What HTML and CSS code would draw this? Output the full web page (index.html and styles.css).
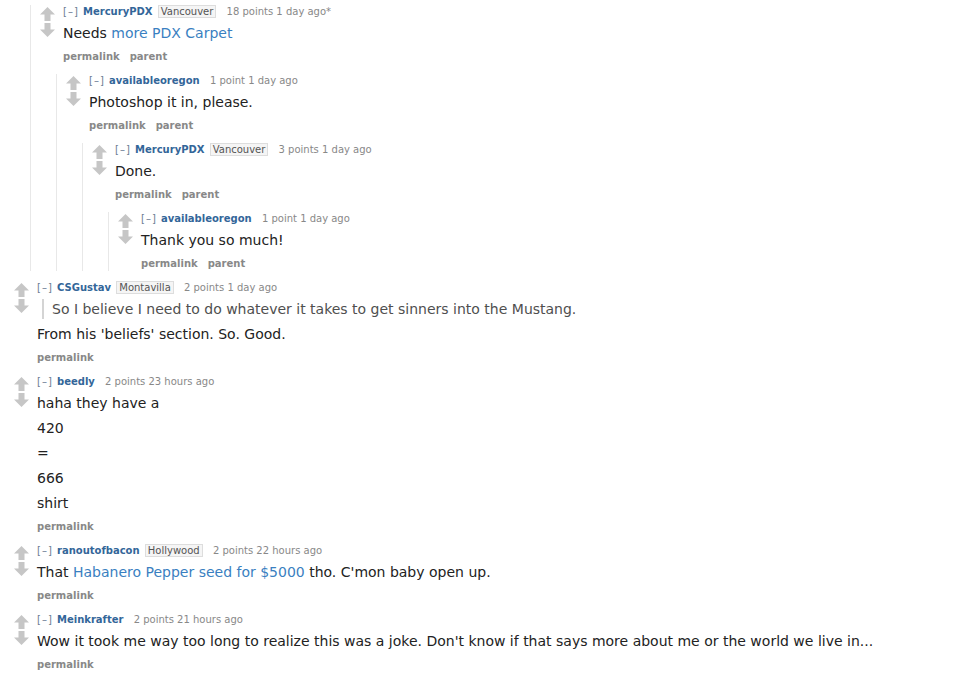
FILE: index.html
```html
<!DOCTYPE html>
<html>
<head>
    <meta charset='utf-8'>
    <title>comments</title>
    <meta name='viewport' content='width=device-width, initial-scale=1'>
    <link rel="stylesheet" href="styles.css">
</head>
<body>
    <svg class="defs" width="0" height="0">
        <defs>
            <symbol id="arrow-up" viewBox="0 0 15 14">
                <path d="M7.5 0 L15 7.5 H10.5 V14 H4.5 V7.5 H0 Z"/>
            </symbol>
            <symbol id="arrow-down" viewBox="0 0 15 14">
                <path d="M7.5 14 L15 6.5 H10.5 V0 H4.5 V6.5 H0 Z"/>
            </symbol>
        </defs>
    </svg>

    <div class="sitetable">
        <div class="child">
            <div class="comment first">
                <div class="row">
                    <div class="midcol">
                        <svg class="arrow up"><use href="#arrow-up"/></svg>
                        <svg class="arrow down"><use href="#arrow-down"/></svg>
                    </div>
                    <div class="entry">
                        <p class="tagline"><a class="expand">[&ndash;]</a> <a class="author">MercuryPDX</a> <span class="flair">Vancouver</span> <span class="score">18 points</span> 1 day ago*</p>
                        <div class="md"><p>Needs <a href="#">more PDX Carpet</a></p></div>
                        <ul class="buttons"><li>permalink</li><li>parent</li></ul>
                    </div>
                </div>
                <div class="child">
                    <div class="comment">
                        <div class="row">
                            <div class="midcol">
                                <svg class="arrow up"><use href="#arrow-up"/></svg>
                                <svg class="arrow down"><use href="#arrow-down"/></svg>
                            </div>
                            <div class="entry">
                                <p class="tagline"><a class="expand">[&ndash;]</a> <a class="author">availableoregon</a> <span class="score">1 point</span> 1 day ago</p>
                                <div class="md"><p>Photoshop it in, please.</p></div>
                                <ul class="buttons"><li>permalink</li><li>parent</li></ul>
                            </div>
                        </div>
                        <div class="child">
                            <div class="comment">
                                <div class="row">
                                    <div class="midcol">
                                        <svg class="arrow up"><use href="#arrow-up"/></svg>
                                        <svg class="arrow down"><use href="#arrow-down"/></svg>
                                    </div>
                                    <div class="entry">
                                        <p class="tagline"><a class="expand">[&ndash;]</a> <a class="author">MercuryPDX</a> <span class="flair">Vancouver</span> <span class="score">3 points</span> 1 day ago</p>
                                        <div class="md"><p>Done.</p></div>
                                        <ul class="buttons"><li>permalink</li><li>parent</li></ul>
                                    </div>
                                </div>
                                <div class="child">
                                    <div class="comment">
                                        <div class="row">
                                            <div class="midcol">
                                                <svg class="arrow up"><use href="#arrow-up"/></svg>
                                                <svg class="arrow down"><use href="#arrow-down"/></svg>
                                            </div>
                                            <div class="entry">
                                                <p class="tagline"><a class="expand">[&ndash;]</a> <a class="author">availableoregon</a> <span class="score">1 point</span> 1 day ago</p>
                                                <div class="md"><p>Thank you so much!</p></div>
                                                <ul class="buttons"><li>permalink</li><li>parent</li></ul>
                                            </div>
                                        </div>
                                    </div>
                                </div>
                            </div>
                        </div>
                    </div>
                </div>
            </div>
        </div>

        <div class="comment">
            <div class="row">
                <div class="midcol">
                    <svg class="arrow up"><use href="#arrow-up"/></svg>
                    <svg class="arrow down"><use href="#arrow-down"/></svg>
                </div>
                <div class="entry">
                    <p class="tagline"><a class="expand">[&ndash;]</a> <a class="author">CSGustav</a> <span class="flair">Montavilla</span> <span class="score">2 points</span> 1 day ago</p>
                    <div class="md">
                        <blockquote><p>So I believe I need to do whatever it takes to get sinners into the Mustang.</p></blockquote>
                        <p>From his 'beliefs' section. So. Good.</p>
                    </div>
                    <ul class="buttons"><li>permalink</li></ul>
                </div>
            </div>
        </div>

        <div class="comment">
            <div class="row">
                <div class="midcol">
                    <svg class="arrow up"><use href="#arrow-up"/></svg>
                    <svg class="arrow down"><use href="#arrow-down"/></svg>
                </div>
                <div class="entry">
                    <p class="tagline"><a class="expand">[&ndash;]</a> <a class="author">beedly</a> <span class="score">2 points</span> 23 hours ago</p>
                    <div class="md">
                        <p>haha they have a</p>
                        <p>420</p>
                        <p>=</p>
                        <p>666</p>
                        <p>shirt</p>
                    </div>
                    <ul class="buttons"><li>permalink</li></ul>
                </div>
            </div>
        </div>

        <div class="comment">
            <div class="row">
                <div class="midcol">
                    <svg class="arrow up"><use href="#arrow-up"/></svg>
                    <svg class="arrow down"><use href="#arrow-down"/></svg>
                </div>
                <div class="entry">
                    <p class="tagline"><a class="expand">[&ndash;]</a> <a class="author">ranoutofbacon</a> <span class="flair">Hollywood</span> <span class="score">2 points</span> 22 hours ago</p>
                    <div class="md"><p>That <a href="#">Habanero Pepper seed for $5000</a> tho. C'mon baby open up.</p></div>
                    <ul class="buttons"><li>permalink</li></ul>
                </div>
            </div>
        </div>

        <div class="comment">
            <div class="row">
                <div class="midcol">
                    <svg class="arrow up"><use href="#arrow-up"/></svg>
                    <svg class="arrow down"><use href="#arrow-down"/></svg>
                </div>
                <div class="entry">
                    <p class="tagline"><a class="expand">[&ndash;]</a> <a class="author">Meinkrafter</a> <span class="score">2 points</span> 21 hours ago</p>
                    <div class="md"><p>Wow it took me way too long to realize this was a joke. Don't know if that says more about me or the world we live in...</p></div>
                    <ul class="buttons"><li>permalink</li></ul>
                </div>
            </div>
        </div>
    </div>
</body>
</html>
```

FILE: styles.css
```css
body {
    margin: 0;
    background: #fff;
    font-family: "DejaVu Sans", Verdana, sans-serif;
    color: #222;
}
.defs {
    position: absolute;
}
.sitetable {
    padding-left: 14px;
}
.comment {
    margin-top: 10px;
}
.comment.first {
    margin-top: 5px;
}
.row {
    display: flex;
    align-items: flex-start;
}
.midcol {
    flex: 0 0 15px;
    width: 15px;
    margin-right: 8px;
}
.arrow {
    display: block;
    width: 15px;
    height: 14px;
    fill: #c6c6c6;
}
.arrow.up {
    margin-top: 2px;
}
.arrow.down {
    margin-top: 2px;
}
.entry {
    flex: 1;
    min-width: 0;
}
.child {
    margin-left: 16px;
    border-left: 1px solid #e8e8e8;
    padding-left: 9px;
}
.tagline {
    margin: 0;
    font-size: 10px;
    line-height: 13px;
    color: #888;
    white-space: nowrap;
}
.tagline .expand {
    color: #6b7b93;
    letter-spacing: 1px;
    margin-right: 1px;
}
.tagline .author {
    color: #369;
    font-weight: bold;
}
.tagline .flair {
    display: inline-block;
    line-height: 11px;
    padding: 0 2px;
    margin-left: 2px;
    background: #f5f5f5;
    border: 1px solid #ddd;
    color: #545454;
}
.tagline .score {
    margin-left: 7px;
}
.md {
    font-size: 14px;
    line-height: 20px;
}
.md p {
    margin: 5px 0;
    white-space: nowrap;
}
.md a {
    color: #3a7fc1;
    text-decoration: none;
}
.md blockquote {
    margin: 5px 0 5px 5px;
    padding: 0 8px;
    border-left: 2px solid #d4d4d4;
    color: #4f4f4f;
}
.buttons {
    list-style: none;
    margin: 7px 0 0;
    padding: 0;
    display: flex;
    gap: 10px;
    font-size: 10px;
    line-height: 14px;
    font-weight: bold;
    color: #888;
}
```
